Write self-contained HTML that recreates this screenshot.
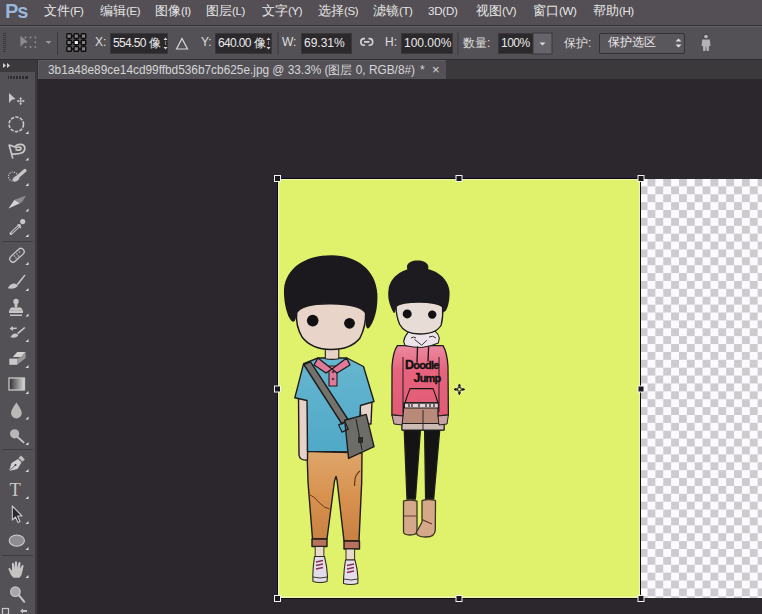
<!DOCTYPE html>
<html><head><meta charset="utf-8">
<style>
*{margin:0;padding:0;box-sizing:border-box}
html,body{width:762px;height:614px;overflow:hidden;background:#2c272d;font-family:"Liberation Sans",sans-serif;position:relative}
.abs{position:absolute}
#menubar{left:0;top:0;width:762px;height:25px;background:#534f54;}
#menuline{left:0;top:25px;width:762px;height:1px;background:#343136;}
#opts{left:0;top:26px;width:762px;height:33px;background:#545156;border-top:1px solid #646166;}
#optline{left:0;top:59px;width:762px;height:1px;background:#2e2b30;}
.mi{position:absolute;top:3px;font-size:12.5px;color:#e6e6e6;white-space:nowrap}
.pk{font-size:11.5px;letter-spacing:-0.4px}
.ps{left:5px;top:0px;font-size:20px;font-weight:bold;color:#9db6d6;letter-spacing:-1.2px;text-shadow:0 0 1px #2d4a70}
.lbl{position:absolute;font-size:12px;color:#dedede;white-space:nowrap}
.box{position:absolute;background:#2c292d;border:1px solid #3a373b;color:#eaeaea;font-size:12px;white-space:nowrap;line-height:14px}
#tabstrip{left:38px;top:60px;width:724px;height:19px;background:#3c393d;}
#tab{left:38px;top:60px;width:408px;height:19px;background:#545156;border-top:1px solid #5d5a5f;border-left:1px solid #5d5a5f;}
#toolbox{left:0;top:60px;width:35px;height:554px;background:#545156;}
#tbhead{left:0;top:60px;width:35px;height:12px;background:#3c393d;}
#tbgap{left:35px;top:60px;width:3px;height:554px;background:#3c393e;border-right:1px solid #302d32}
#img{left:278px;top:179px;width:362px;height:419px;background:#e0f26b;}
#checker{left:641px;top:179px;width:121px;height:419px;
 background:conic-gradient(#cdcbcf 25%,#fcfafd 0 50%,#cdcbcf 0 75%,#fcfafd 0);
 background-size:15.74px 15.77px;background-position:-1.37px -0.5px;}
svg{position:absolute;left:0;top:0}
</style></head><body>
<div class="abs" id="menubar"></div>
<div class="abs" id="menuline"></div>
<div class="abs ps">Ps</div>
<div class="mi" style="left:44px">文件<span class="pk">(F)</span></div>
<div class="mi" style="left:100px">编辑<span class="pk">(E)</span></div>
<div class="mi" style="left:155px">图像<span class="pk">(I)</span></div>
<div class="mi" style="left:206px">图层<span class="pk">(L)</span></div>
<div class="mi" style="left:262px">文字<span class="pk">(Y)</span></div>
<div class="mi" style="left:318px">选择<span class="pk">(S)</span></div>
<div class="mi" style="left:373px">滤镜<span class="pk">(T)</span></div>
<div class="mi" style="left:428px;top:4px"><span class="pk" style="letter-spacing:-0.2px">3D(D)</span></div>
<div class="mi" style="left:476px">视图<span class="pk">(V)</span></div>
<div class="mi" style="left:533px">窗口<span class="pk">(W)</span></div>
<div class="mi" style="left:593px">帮助<span class="pk">(H)</span></div>

<div class="abs" id="opts"></div>
<div class="abs" id="optline"></div>
<div class="lbl" style="left:95px;top:35px">X:</div>
<div class="box" style="left:110px;top:33px;width:58px;height:21px;padding:2px 0 0 2px;overflow:hidden"><span style="letter-spacing:-0.65px">554.50</span> 像</div>
<div class="lbl" style="left:201px;top:35px">Y:</div>
<div class="box" style="left:215px;top:33px;width:57px;height:21px;padding:2px 0 0 2px;overflow:hidden"><span style="letter-spacing:-0.65px">640.00</span> 像</div>
<div class="lbl" style="left:282px;top:35px">W:</div>
<div class="box" style="left:301px;top:33px;width:51px;height:21px;padding:2px 0 0 2px">69.31%</div>
<div class="lbl" style="left:385px;top:35px">H:</div>
<div class="box" style="left:401px;top:33px;width:52px;height:21px;padding:2px 0 0 2px">100.00%</div>
<div class="lbl" style="left:463px;top:35px">数量:</div>
<div class="box" style="left:498px;top:33px;width:36px;height:21px;padding:2px 0 0 2px;letter-spacing:-0.5px">100%</div>
<div class="lbl" style="left:564px;top:35px">保护:</div>
<div class="box" style="left:599px;top:33px;width:86px;height:21px;padding:1px 0 0 8px;background:#5a575c;border-color:#343136;border-radius:2px">保护选区</div>

<div class="abs" id="tabstrip"></div>
<div class="abs" id="tab"></div>
<div class="lbl" style="left:48px;top:63px;color:#d6d6d6;font-size:11.85px">3b1a48e89ce14cd99ffbd536b7cb625e.jpg @ 33.3% (图层 0, RGB/8#)</div>
<div class="lbl" style="left:420px;top:63px;color:#d6d6d6">*</div>
<div class="lbl" style="left:432px;top:62px;color:#d6d6d6;font-size:13px">×</div>

<div class="abs" id="toolbox"></div>
<div class="abs" id="tbhead"></div>
<div class="abs" id="tbgap"></div>

<div class="abs" id="img"></div>
<div class="abs" id="checker"></div>

<svg width="762" height="614" viewBox="0 0 762 614">
<defs>
 <linearGradient id="pantsG" x1="0" y1="0" x2="0" y2="1"><stop offset="0" stop-color="#dea66c"/><stop offset="0.5" stop-color="#d8924e"/><stop offset="1" stop-color="#c98044"/></linearGradient>
 <linearGradient id="shirtG" x1="0" y1="0" x2="0" y2="1"><stop offset="0" stop-color="#66b6cf"/><stop offset="1" stop-color="#50a9c8"/></linearGradient>
 <linearGradient id="hoodG" x1="0" y1="0" x2="0" y2="1"><stop offset="0" stop-color="#ea8aa0"/><stop offset="0.35" stop-color="#e8647e"/><stop offset="1" stop-color="#e05a74"/></linearGradient>
</defs>
<!-- ===== BOY ===== -->
<g stroke="#1f1d1c" stroke-width="1.4" stroke-linejoin="round">
 <!-- pants -->
 <path d="M307,451 L362,453 L361.7,482 L359,541 L344,541 L337,480 L336,476.5 L334.5,481 L327,539 L312.5,539 L308,482 Z" fill="url(#pantsG)"/>
 <path d="M308.5,494 q7,3 11,9 q5,5 10,6" fill="none" stroke="#6a3a20" stroke-width="1"/>
 <path d="M360,471 q-4,3 -5,8 l-0.5,7" fill="none" stroke="#5a3018" stroke-width="1.1"/>
 <path d="M312,539 L327,539 L327,546.5 L312,546.5 Z" fill="#b8715c"/>
 <path d="M344,541 L359.5,541 L359.5,549 L344,549 Z" fill="#b8715c"/>
 <rect x="315.2" y="546.5" width="8.7" height="10" fill="#eadacc" stroke-width="0.9"/>
 <rect x="346" y="549" width="8.6" height="11" fill="#eadacc" stroke-width="0.9"/>
 <path d="M314.5,556.5 L324.5,556.5 Q327,566 327.5,576 L327,581.5 Q320,583.5 313,581.5 L312.8,576 Q313,566 314.5,556.5 Z" fill="#e4dcea" stroke="#2e2a20" stroke-width="1.1"/>
 <path d="M313,577 Q320,579 327.3,577" fill="none" stroke="#2e2a20" stroke-width="0.9"/>
 <path d="M316,562 l7,-1.5 M316,565.5 l7,-1.5 M316,569 l7,-1.5" stroke="#8a3050" stroke-width="1.4"/>
 <path d="M345.5,560 L355,560 Q357.5,569 358,578 L357.8,583.5 Q350.5,585.5 343.5,583.5 L343.6,578 Q344,569 345.5,560 Z" fill="#e4dcea" stroke="#2e2a20" stroke-width="1.1"/>
 <path d="M343.7,579 Q351,581 357.9,579" fill="none" stroke="#2e2a20" stroke-width="0.9"/>
 <path d="M347,565.5 l7,-1.5 M347,569 l7,-1.5 M347,572.5 l7,-1.5" stroke="#8a3050" stroke-width="1.4"/>
 <!-- arms -->
 <path d="M298.5,397 L308,400 L307.5,460 Q300,461 299,455 Z" fill="#e6d2c8"/>
 <path d="M360,403 L372,401 L371,424 L361,424 Z" fill="#e6d2c8"/>
 <!-- shirt -->
 <path d="M318,358 L347,358 L363.5,366.5 L374,401.5 L360.5,405.5 L358,452 L307.5,451.5 L307,400.5 L294.8,397.8 L303.6,363.6 Z" fill="url(#shirtG)"/>
 <!-- collar & placket -->
 <rect x="329" y="366" width="8" height="20" fill="#e07a98" stroke-width="1.1"/>
 <circle cx="333" cy="372" r="1.3" fill="#6a3050" stroke="none"/><circle cx="333" cy="379" r="1.3" fill="#6a3050" stroke="none"/>
 <path d="M318,358 L332,369 L346.6,358 L350,365 L337,373 L332,369 L326,373 L314,365 Z" fill="#e07a98"/>
 <!-- strap -->
 <path d="M303.8,364.5 L310.5,361.8 L348,419.5 L342,424 Z" fill="#73736c"/>
 <!-- bag -->
 <path d="M344.7,420.3 L366.2,414.4 L374,446.6 L348.6,458.4 Z" fill="#6c6c68"/>
 <path d="M356,419 L362,450" fill="none" stroke-width="1"/>
 <rect x="358" y="437" width="5" height="6" fill="#2a2a2a" stroke="none"/>
 <rect x="340" y="423" width="7" height="8" fill="none" stroke-width="1.2" transform="rotate(-25 343.5 427)"/>
 <!-- neck -->
 <path d="M325.3,347 L338.8,347 L338.8,358.7 Q332,360 325.3,358.7 Z" fill="#e6d2c6" stroke-width="1.1"/>
</g>
<!-- boy hair & face -->
<path d="M296.6,313 C296,318 295.5,322.5 292.5,321.5 C288,319 283.5,304 284,289 C286,268 305,255.2 331.5,255.2 C357,255.2 376,270 377.4,294 C378,310 374,322 369,328 C367,329.5 365.5,327 365.6,320 C365,312 360,309 345,306.5 C335,305.5 315,305.5 305,308 C300,309.5 298,311 296.6,313 Z" fill="#1b191d"/>
<path d="M296.6,313 C300,306 315,303.5 331,303.7 C348,304 362,306 365.6,313 C366,322 364,330 360,338 C353,347 342,349.5 331,349.5 C320,349.5 309,346 302,337 C298,330 296,320 296.6,313 Z" fill="#e8d4c8" stroke="#1a1a1a" stroke-width="1.5"/>
<circle cx="312.7" cy="320.6" r="5.8" fill="#121012"/>
<circle cx="349.5" cy="323.3" r="5.4" fill="#121012"/>

<!-- ===== GIRL ===== -->
<g stroke="#1f1d1c" stroke-width="1.3" stroke-linejoin="round">
 <!-- legs -->
 <path d="M404.2,429 L420.5,429 L415.4,499 L407,499 Z" fill="#141414"/>
 <path d="M424.6,429 L439.8,429 L433.7,499 L425.6,499 Z" fill="#141414"/>
 <!-- boots -->
 <path d="M403.5,501 Q410,499 417,501 L417,531 Q417,535 410,535 Q403,535 403.5,531 Z" fill="#d6a88a" stroke="#3a3420"/>
 <path d="M422,500.5 Q429,498.5 435.5,500.5 L435.3,530 Q435,537 426,537 Q416,537 416.5,532 L422,522 Z" fill="#d6a88a" stroke="#3a3420"/>
 <path d="M404,516 l12.5,0 M422,519.6 l10,4.4" stroke="#6a3a30" stroke-width="1.2"/>
 <!-- shorts -->
 <path d="M402.5,404 L443.5,404 L444,430 L402,430 Z" fill="#b88a7a"/>
 <path d="M402,423.5 L444,423.5 L444,430 L402,430 Z" fill="#cdbcb4" stroke-width="1"/>
 <path d="M423,410 L423,430" stroke-width="0.9"/>
 <!-- hoodie -->
 <path d="M397.4,345.7 L443,345.7 Q447,352 448,366.5 L448.4,415 L438,416 L438,403 L404,403 L403,416 L391.9,415 L392,366.5 Q393,352 397.4,345.7 Z" fill="url(#hoodG)"/>
 <path d="M404.5,402.8 L438.3,402.8 L438.3,408 L404.5,408 Z" fill="#e8d4d8" stroke-width="1"/>
 <path d="M409,404 l0,3 M412,404 l0,3 M419,404 l0,3 M426,404 l0,3 M430,404 l0,3 M434,404 l0,3" stroke-width="1.2"/>
 <path d="M403,357 L403,412 M439,357 L439,412" fill="none" stroke-width="1"/>
 <!-- cuffs -->
 <path d="M391.9,415 L403,416 L402,425 L394,424 Z" fill="#c8a4a8" stroke-width="1"/>
 <path d="M438,416 L448.4,415 L447,424 L439,425 Z" fill="#c8a4a8" stroke-width="1"/>
 <!-- hood white -->
 <path d="M408,332.3 Q404,337 403.7,341.6 L405,345.5 Q413,347.5 421.7,347.5 Q431,346.5 438.3,343 L439.3,338 Q438.5,334 435.4,331.3 Q421,335 408,332.3 Z" fill="#ece4ea" stroke-width="1.1"/>
 <path d="M414.5,339.4 L421.7,345.2 L426.8,340.2 M411,338 q3,-2 5,0 M429,337 q4,-2 7,1" fill="none" stroke-width="0.9"/>
</g>
<g fill="none" stroke="#151515" stroke-linecap="round">
 <path d="M417.5,347 L417,362 M428.6,347 L428,361" stroke-width="1.3"/>
 <path d="M410,388.6 L433,388.6 Q436,396 438,403 L405,403 Q407,396 410,388.6 Z" stroke-width="1.1"/>
</g>
<text x="405" y="368.5" font-family="Liberation Sans" font-weight="bold" font-size="11" fill="#111" stroke="#111" stroke-width="0.35" letter-spacing="-0.8"><tspan font-size="12.5">D</tspan>oodle</text>
<text x="413.5" y="381.5" font-family="Liberation Sans" font-weight="bold" font-size="11" fill="#111" stroke="#111" stroke-width="0.35" letter-spacing="-0.8"><tspan font-size="12.5">J</tspan>ump</text>
<!-- girl hair & face -->
<path d="M407.5,270 C405,263 411,260.5 417.6,260.5 C424,260.5 430,263 428,270 Z" fill="#1d1b1f"/>
<path d="M396.2,306.2 C396,310 395,313 394,313.2 C389,305 387.5,297 388.5,290 C390,277 402,268 418,268 C436,268 448,278 449.5,291 C450,300 448,307 446,310.4 L442.6,313 C442,309 441,308 442.6,307 C440,304 430,302 419,302 C408,302 400,303 396.2,306.2 Z" fill="#1d1b1f"/>
<path d="M396.2,306.2 C400,303 408,302 419,302 C430,302 440,304 442.6,307 C443,313 442.5,320 441.2,325 C438,331 430,334 419.7,334 C410,334 403,331 399.6,324.2 C397,318 396,312 396.2,306.2 Z" fill="#e8dcd6" stroke="#1a1a1a" stroke-width="1.3"/>
<circle cx="407.2" cy="313.9" r="4.5" fill="#121012"/>
<circle cx="432.2" cy="314.6" r="4.2" fill="#121012"/>

<!-- ===== bounding box & handles ===== -->
<rect x="274" y="176" width="3" height="424" fill="#2a2436"/>
<rect x="277" y="176" width="364" height="2" fill="#2a2436"/>
<rect x="278" y="179" width="1" height="419" fill="#f2f6b4"/>
<rect x="278" y="179" width="362" height="1" fill="#eef4a8"/>
<rect x="639" y="179" width="1" height="419" fill="#f2f6b4"/>
<rect x="278" y="596.5" width="362" height="1.5" fill="#f2f6b4"/>
<rect x="277.5" y="178.5" width="363" height="420" fill="none" stroke="#0c0b10" stroke-width="1"/>
<g fill="#1b1a22" stroke="#f4f4f4" stroke-width="1">
 <rect x="274.5" y="175.5" width="6" height="6"/>
 <rect x="456" y="175.5" width="6" height="6"/>
 <rect x="638" y="175.5" width="6" height="6"/>
 <rect x="274.5" y="386" width="6" height="6"/>
 <rect x="638" y="386" width="6" height="6"/>
 <rect x="274.5" y="595.5" width="6" height="6"/>
 <rect x="456" y="595.5" width="6" height="6"/>
 <rect x="638" y="595.5" width="6" height="6"/>
</g>
<!-- center pivot -->
<g>
 <circle cx="459.4" cy="389.4" r="3.6" fill="none" stroke="#f4f8d0" stroke-width="1.6" opacity="0.8"/>
 <circle cx="459.4" cy="389.4" r="1.9" fill="#e8f0b0" stroke="#1a1a1a" stroke-width="1.1"/>
 <path d="M459.4,384 L460.5,386.3 L458.3,386.3 Z M459.4,394.8 L460.5,392.5 L458.3,392.5 Z M454,389.4 L456.3,388.3 L456.3,390.5 Z M464.8,389.4 L462.5,388.3 L462.5,390.5 Z" fill="#1a1a1a" stroke="#1a1a1a" stroke-width="0.9" stroke-linejoin="round"/>
</g>

<!-- ===== options bar icons ===== -->
<g fill="#3a383c">
 <rect x="3" y="33" width="3" height="1"/><rect x="3" y="35" width="3" height="1"/><rect x="3" y="37" width="3" height="1"/><rect x="3" y="39" width="3" height="1"/><rect x="3" y="41" width="3" height="1"/><rect x="3" y="43" width="3" height="1"/><rect x="3" y="45" width="3" height="1"/><rect x="3" y="47" width="3" height="1"/><rect x="3" y="49" width="3" height="1"/><rect x="3" y="51" width="3" height="1"/>
</g>
<g fill="#8e8b90">
 <path d="M20.4,35.8 L28,42.2 L24,43 L20.4,46.8 Z"/>
 <circle cx="25.5" cy="37.5" r="1"/><circle cx="30.5" cy="37.5" r="1"/><circle cx="35.3" cy="37.5" r="1"/>
 <circle cx="35.3" cy="42.3" r="1"/>
 <circle cx="25.5" cy="47" r="1"/><circle cx="30.5" cy="47" r="1"/><circle cx="35.3" cy="47" r="1"/>
 <path d="M45.5,41 L51.6,41 L48.5,44 Z" fill="#9a979c"/>
</g>
<rect x="57" y="32" width="1" height="23" fill="#3c393e"/>
<g stroke="#0e0e0e" stroke-width="1.4" fill="#807e82">
 <path d="M69,36 L83.5,36 M69,42.5 L83.5,42.5 M69,49 L83.5,49 M69,36 L69,49 M76.3,36 L76.3,49 M83.5,36 L83.5,49" fill="none"/>
 <rect x="66.8" y="33.8" width="4.6" height="4.6" rx="0.8"/><rect x="74" y="33.8" width="4.6" height="4.6" rx="0.8"/><rect x="81.2" y="33.8" width="4.6" height="4.6" rx="0.8"/>
 <rect x="66.8" y="40.2" width="4.6" height="4.6" rx="0.8"/><rect x="74" y="40.2" width="4.6" height="4.6" rx="0.8" fill="#f4f4f4"/><rect x="81.2" y="40.2" width="4.6" height="4.6" rx="0.8"/>
 <rect x="66.8" y="46.6" width="4.6" height="4.6" rx="0.8"/><rect x="74" y="46.6" width="4.6" height="4.6" rx="0.8"/><rect x="81.2" y="46.6" width="4.6" height="4.6" rx="0.8"/>
</g>
<g fill="#d8d8d8">
 <path d="M163.5,40 L165.5,37.5 L167.5,40 Z M163.5,47 L165.5,49.5 L167.5,47 Z"/><rect x="165" y="41.5" width="1" height="1"/><rect x="165" y="43.5" width="1" height="1"/>
 <path d="M266.5,40 L268.5,37.5 L270.5,40 Z M266.5,47 L268.5,49.5 L270.5,47 Z"/><rect x="268" y="41.5" width="1" height="1"/><rect x="268" y="43.5" width="1" height="1"/>
</g>
<path d="M176.5,49 L182,38.5 L187.5,49 Z" fill="none" stroke="#d8d8d8" stroke-width="1.2"/>
<rect x="277.5" y="32" width="1" height="23" fill="#3c393e"/>
<path d="M365,38.6 L364,38.6 Q360.8,38.6 360.8,41.9 Q360.8,45.2 364,45.2 L365,45.2 M368.5,38.6 L369.5,38.6 Q372.7,38.6 372.7,41.9 Q372.7,45.2 369.5,45.2 L368.5,45.2 M364,41.9 L369.5,41.9" fill="none" stroke="#d2d2d2" stroke-width="1.6"/>
<rect x="457.5" y="32" width="1" height="23" fill="#3c393e"/>
<rect x="533" y="33" width="19" height="21" fill="#66636a" stroke="#3a373b" stroke-width="1"/>
<path d="M539.5,42.5 L545.5,42.5 L542.5,45.5 Z" fill="#dcdcdc"/>
<path d="M675.5,41.5 L678.5,38.5 L681.5,41.5 Z M675.5,44.5 L678.5,47.5 L681.5,44.5 Z" fill="#e0e0e0"/>
<g fill="#b4b2b6">
 <circle cx="706" cy="36.6" r="2.4" stroke="#2e2c30" stroke-width="0.8"/>
 <path d="M702.3,39.5 L709.8,39.5 L710.5,46 L709,46 L708.8,51 L706.6,51 L706.2,46.5 L705.8,46.5 L705.4,51 L703.2,51 L703,46 L701.6,46 Z"/>
</g>

<!-- ===== toolbox ===== -->
<path d="M3,63 L6,65.5 L3,68 Z M7,63 L10,65.5 L7,68 Z" fill="#d0d0d0"/>
<g fill="#2e2b30"><rect x="8" y="76" width="20" height="3"/></g>
<g fill="#5a575c"><rect x="9" y="76" width="1" height="3"/><rect x="12" y="76" width="1" height="3"/><rect x="15" y="76" width="1" height="3"/><rect x="18" y="76" width="1" height="3"/><rect x="21" y="76" width="1" height="3"/><rect x="24" y="76" width="1" height="3"/></g>
<g fill="#c6c6c6" stroke="none">
 <!-- move -->
 <path d="M9,93 L15.5,99 L12,99.8 L9,103 Z"/>
 <path d="M20.7,97 L22.2,99 L21.2,99 L21.2,100.6 L22.8,100.6 L22.8,99.6 L24.8,101.1 L22.8,102.6 L22.8,101.6 L21.2,101.6 L21.2,103.2 L22.2,103.2 L20.7,105.2 L19.2,103.2 L20.2,103.2 L20.2,101.6 L18.6,101.6 L18.6,102.6 L16.6,101.1 L18.6,99.6 L18.6,100.6 L20.2,100.6 L20.2,99 L19.2,99 Z"/>
 <!-- marquee -->
 <ellipse cx="16.3" cy="124.3" rx="7.2" ry="7.3" fill="none" stroke="#c8c8c8" stroke-width="1.6" stroke-dasharray="3.4 1.3"/>
</g>
<g fill="none" stroke="#c8c8c8" stroke-width="1.7" stroke-linejoin="round">
 <!-- magnetic lasso -->
 <path d="M9,144.5 L12.8,158.5"/>
 <path d="M9.5,145 L15,147 C17,143.5 24.5,143 24.8,148 C25,153 20,154.5 11.5,154"/>
 <path d="M15.5,148.5 C17,146.5 21,146.5 21,148.5 C21,150.5 17,150.5 15.5,149.5"/>
 <!-- quick select -->
 <circle cx="13" cy="176.5" r="4.5" stroke-dasharray="1.2 1.2" stroke-width="1.2"/>
 <path d="M18,176.5 L25,170.5" stroke-width="3.2" stroke-linecap="round"/>
 <!-- eyedropper tube -->
 <path d="M11,233.5 L19.5,225.5" stroke-width="3" stroke-linecap="round"/>
 <path d="M11.5,233 L19,226" stroke="#3a383c" stroke-width="1"/>
 <!-- healing -->
 <rect x="8.5" y="252" width="17" height="6.5" rx="3.2" transform="rotate(-42 17 255.3)" stroke-width="1.3"/>
</g>
<g fill="#c6c6c6">
 <ellipse cx="16" cy="178.8" rx="3.6" ry="2.4" transform="rotate(-35 16 178.8)"/>
 <!-- crop knife -->
 <path d="M8.5,208.6 L14.5,199.8 L20,203.2 Z" fill="#d4d4d4"/>
 <path d="M14.5,199.8 L26,195.6 L22.5,201.5 L20,203.2 Z" fill="#8c8a8e"/>
 <!-- eyedropper -->
 <circle cx="22.7" cy="221.6" r="2.6"/>
 <path d="M18,224 L21.5,227.5 L20.5,228.5 L17,225 Z"/>
 <!-- healing dots -->
 <g fill="#c6c6c6"><circle cx="14.5" cy="256" r="0.8"/><circle cx="17" cy="254" r="0.8"/><circle cx="19.5" cy="252" r="0.8"/><circle cx="16" cy="258" r="0.8"/><circle cx="18.5" cy="256" r="0.8"/></g>
 <!-- brush -->
 <path d="M16.7,284 L24.5,274.5 L25.5,275.5 L18,285.2 Z"/>
 <path d="M7.8,288.3 Q10,283.5 14.5,283.5 Q18,284 17.5,286.5 Q15,289.5 7.8,288.3 Z"/>
 <!-- stamp -->
 <circle cx="16" cy="301.5" r="2.7"/><rect x="14.6" y="303" width="2.8" height="4.5"/><path d="M11,307.5 L21,307.5 L22.5,310 L9.5,310 Z"/><rect x="9" y="310.2" width="14" height="2.8"/><rect x="10" y="314.5" width="12" height="1.5"/>
 <!-- history brush -->
 <path d="M17,333 L24.3,327 L25.3,328 L18.3,334.3 Z"/>
 <path d="M10.4,337.3 Q12,333.5 15.5,333.5 Q18.5,334 18,336 Q15.5,338.5 10.4,337.3 Z"/>
 <path d="M9.5,328.5 L13,326 L12.8,327.7 L17,327.5 L16.5,329 L12.8,329.3 L13,331 Z"/>
 <!-- eraser -->
 <path d="M12.8,357 L17.2,352 L25.6,352 L21.2,357 Z" fill="#d2d2d2"/>
 <path d="M21.2,357 L25.6,352 L25.6,358 L17.2,364.8 L17.2,358.6 Z" fill="#9a989c"/>
 <rect x="9.3" y="358.6" width="7.9" height="6.2" fill="#cacaca"/>
 <!-- blur drop -->
 <path d="M16.4,402.4 Q11,410 11,413 A5.4,5.4 0 0,0 21.8,413 Q21.8,410 16.4,402.4 Z" fill="#b8b8b8"/>
 <!-- dodge -->
 <circle cx="14.6" cy="433.8" r="4.6" fill="#b8b8b8"/>
 <path d="M17.5,437 L23.6,442.4" stroke="#c6c6c6" stroke-width="1.8" stroke-linecap="round"/>
 <!-- pen -->
 <path d="M9.1,471 L11.5,463 L18,459 L21.5,462.5 L17.5,469 Z" fill="#d0d0d0"/>
 <path d="M18.5,458 L21,455.5 L24.8,459.3 L22.3,461.8 Z" fill="#c0c0c0"/>
 <circle cx="15.5" cy="465" r="1" fill="#3a383c"/>
 <path d="M9.1,471 L15.5,465" stroke="#3a383c" stroke-width="0.7"/>
 <!-- hand -->
 <path d="M11,575 L8.4,569 Q8.4,567.5 9.8,568 L12,571 L12,563.5 Q13,562 14,563.5 L14.5,568 L15,561.8 Q16,560.8 17,561.8 L17.3,568 L18.5,562.5 Q19.5,561.5 20.5,562.5 L20.2,568.5 L22.2,565 Q23.5,564.5 23.6,566 L21.5,575 L19.5,577.7 L13.5,577.7 Z" fill="#c4c4c4"/>
 <!-- zoom -->
 <circle cx="15.4" cy="591.7" r="4.8" fill="#a8a6aa" stroke="#c8c8c8" stroke-width="1.2"/>
 <path d="M18.8,595.2 L24.3,601.8" stroke="#c6c6c6" stroke-width="2" stroke-linecap="round"/>
</g>
<!-- eyedropper tube dark interior handled above -->
<!-- gradient box -->
<defs><linearGradient id="gr" x1="0" x2="1"><stop offset="0" stop-color="#2e2c30"/><stop offset="1" stop-color="#d8d8d8"/></linearGradient></defs>
<rect x="9" y="378" width="15.5" height="12" fill="url(#gr)" stroke="#c8c8c8" stroke-width="1.3"/>
<!-- T -->
<text x="9.6" y="496" font-family="Liberation Serif" font-size="18.5" fill="#c8c8c8">T</text>
<!-- path select arrow -->
<path d="M12.3,506 L12.3,520 L15.5,517 L18,522.5 L20,521.5 L17.6,516 L22,516 Z" fill="#2a282c" stroke="#c8c8c8" stroke-width="1.1" stroke-linejoin="round"/>
<!-- ellipse -->
<ellipse cx="16.8" cy="540.6" rx="7.6" ry="5.6" fill="#8e8c90" stroke="#cfcfcf" stroke-width="1.1"/>
<!-- bottom partial icons -->
<rect x="2.5" y="608.5" width="6" height="6" fill="none" stroke="#c8c8c8" stroke-width="1.2"/>
<path d="M20,611 L23,608.5 L23,610 L27,610 L27,612 L23,612 L23,613.5 Z" fill="#c8c8c8"/>
<!-- separators -->
<rect x="2" y="241" width="31" height="1" fill="#3e3b40"/>
<rect x="2" y="449" width="31" height="1" fill="#3e3b40"/>
<rect x="2" y="555" width="31" height="1" fill="#3e3b40"/>
<!-- small corner triangles -->
<g fill="#e0e0e0">
 <path d="M25.5,134 L28.5,131 L28.5,134 Z"/><path d="M25.5,160.5 L28.5,157.5 L28.5,160.5 Z"/><path d="M25.5,186 L28.5,183 L28.5,186 Z"/><path d="M25.5,211.5 L28.5,208.5 L28.5,211.5 Z"/><path d="M25.5,237 L28.5,234 L28.5,237 Z"/>
 <path d="M25.5,265 L28.5,262 L28.5,265 Z"/><path d="M25.5,291 L28.5,288 L28.5,291 Z"/><path d="M25.5,316.5 L28.5,313.5 L28.5,316.5 Z"/><path d="M25.5,342 L28.5,339 L28.5,342 Z"/><path d="M25.5,368 L28.5,365 L28.5,368 Z"/>
 <path d="M25.5,394 L28.5,391 L28.5,394 Z"/><path d="M25.5,419.5 L28.5,416.5 L28.5,419.5 Z"/><path d="M25.5,445 L28.5,442 L28.5,445 Z"/>
 <path d="M25.5,472 L28.5,469 L28.5,472 Z"/><path d="M25.5,499 L28.5,496 L28.5,499 Z"/><path d="M25.5,524 L28.5,521 L28.5,524 Z"/><path d="M25.5,550 L28.5,547 L28.5,550 Z"/><path d="M25.5,578 L28.5,575 L28.5,578 Z"/>
</g>
</svg>
</body></html>
